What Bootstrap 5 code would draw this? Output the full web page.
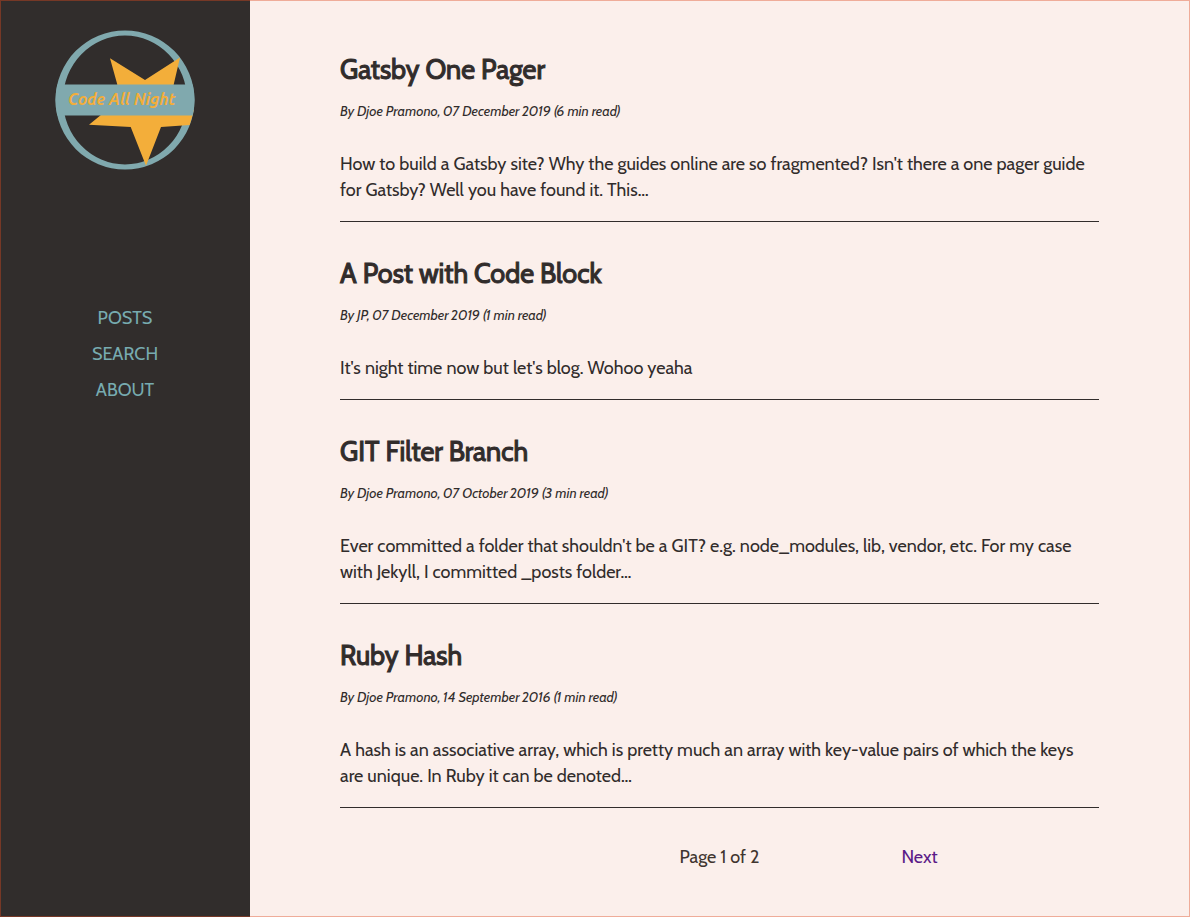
<!DOCTYPE html>
<html lang="en">
<head>
<meta charset="utf-8">
<meta name="viewport" content="width=device-width, initial-scale=1">
<title>Code All Night</title>
<link href="https://cdn.jsdelivr.net/npm/bootstrap@5.3.0/dist/css/bootstrap.min.css" rel="stylesheet">
<style>
  body { font-family: Cabin, Lato, "Open Sans", sans-serif; font-size: 18px; line-height: 26px; color: #312c2b; background: #fbefeb; }
  .page-frame::after { content: ""; position: fixed; inset: 0; border: 1px solid rgba(223, 73, 30, .4); pointer-events: none; }
  .sidebar { width: 250px; background: #312d2c; padding-top: 30px; }
  .logo { width: 140px; height: 140px; }
  .logo text { font-family: Ubuntu, "Noto Sans", sans-serif; font-size: 16px; font-weight: 700; font-style: italic; }
  .site-menu { margin-top: 135px; gap: 10px; }
  .site-menu a { color: #77abb0; text-decoration: none; }
  main { padding: 52px 91px 34px 90px; }
  .post { padding-bottom: 18px; margin-bottom: 34px; border-bottom: 1px solid #312c2b; }
  .post h2 { font-size: 27px; line-height: 36px; font-weight: 400; -webkit-text-stroke: 1px #312c2b; margin-bottom: 13px; }
  .post h2 a { color: inherit; text-decoration: none; }
  .byline { font-size: 14px; line-height: 20px; font-style: italic; margin-bottom: 30px; }
  .pager { padding-top: 2px; color: #40352f; }
  .pager > * { width: 200px; text-align: center; }
  .pager a { color: #5b1b88; text-decoration: none; }
</style>
</head>
<body>
<div class="page-frame d-flex min-vh-100">
  <aside class="sidebar flex-shrink-0 d-flex flex-column align-items-center">
    <a href="#" aria-label="Code All Night">
      <svg class="logo d-block" viewBox="0 0 140 140">
        <path fill-rule="evenodd" fill="#80a9ae" d="M.5 70a69.500 69.500 0 0 1 139 0a69.500 69.500 0 0 1-139 0ZM8 70a62 64.500 0 0 0 124 0a62 64.500 0 0 0-124 0Z"/>
        <path d="M55 28.3 90 50 125 27.5 118.7 54.5V80H138.700L137.3 86 134.7 95 106 97 91 135.7 75.7 97 34 94.7 52 80 62.3 54.5Z" fill="#f3ae3a"/>
        <path d="M2.300 54.400H137.700A69.500 69.500 0 0 1 137.700 85.600H2.300A69.500 69.500 0 0 1 2.300 54.400Z" fill="#80a9ae"/>
        <text x="13" y="75" fill="#f3ae3a">Code All Night</text>
      </svg>
    </a>
    <nav class="site-menu d-flex flex-column align-items-center">
      <a href="#">POSTS</a>
      <a href="#">SEARCH</a>
      <a href="#">ABOUT</a>
    </nav>
  </aside>
  <main class="flex-grow-1">
    <article class="post">
      <h2><a href="#">Gatsby One Pager</a></h2>
      <p class="byline">By Djoe Pramono, 07 December 2019 (6 min read)</p>
      <p class="mb-0">How to build a Gatsby site? Why the guides online are so fragmented? Isn't there a one pager guide for Gatsby? Well you have found it. This…</p>
    </article>
    <article class="post">
      <h2><a href="#">A Post with Code Block</a></h2>
      <p class="byline">By JP, 07 December 2019 (1 min read)</p>
      <p class="mb-0">It's night time now but let's blog. Wohoo yeaha</p>
    </article>
    <article class="post">
      <h2><a href="#">GIT Filter Branch</a></h2>
      <p class="byline">By Djoe Pramono, 07 October 2019 (3 min read)</p>
      <p class="mb-0">Ever committed a folder that shouldn't be a GIT? e.g. node_modules, lib, vendor, etc. For my case with Jekyll, I committed _posts folder…</p>
    </article>
    <article class="post">
      <h2><a href="#">Ruby Hash</a></h2>
      <p class="byline">By Djoe Pramono, 14 September 2016 (1 min read)</p>
      <p class="mb-0">A hash is an associative array, which is pretty much an array with key-value pairs of which the keys are unique. In Ruby it can be denoted…</p>
    </article>
    <nav class="pager d-flex justify-content-center" aria-label="Pagination">
      <span></span>
      <span>Page 1 of 2</span>
      <a href="#">Next</a>
    </nav>
  </main>
</div>
<script src="https://cdn.jsdelivr.net/npm/bootstrap@5.3.0/dist/js/bootstrap.bundle.min.js"></script>
</body>
</html>
